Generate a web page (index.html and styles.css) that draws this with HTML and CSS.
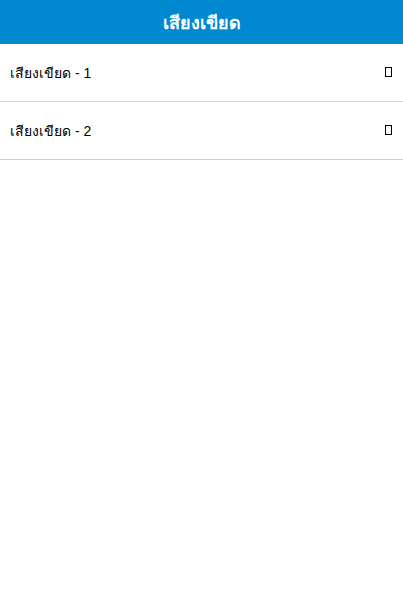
FILE: index.html
```html
<!DOCTYPE html>
<html>
    <head>
        <link rel="stylesheet" href="styles.css">
        <title>เสียงเขียด</title>
    </head>

    <body>
        <div class="app-header">เสียงเขียด</div>
        <ul class="sound-list">
            <li class="sound-item">
                <span class="sound-name">เสียงเขียด - 1</span>
                <span class="sound-icon"></span>
            </li>
            <li class="sound-item">
                <span class="sound-name">เสียงเขียด - 2</span>
                <span class="sound-icon"></span>
            </li>
        </ul>
    </body>
</html>
```

FILE: styles.css
```css
body {
    margin: 0;
    background-color: white;
    font-family: "Liberation Sans", Arial, sans-serif;
}

.app-header {
    height: 44px;
    background-color: #0088d1;
    color: white;
    font-size: 18px;
    font-weight: bold;
    display: flex;
    justify-content: center;
    align-items: center;
}

.sound-list {
    list-style: none;
    margin: 0;
    padding: 0;
}

.sound-item {
    height: 57px;
    border-bottom: 1px solid #d0d0d0;
    display: flex;
    align-items: center;
    justify-content: space-between;
    padding: 0 11px 0 10px;
    font-size: 14px;
    color: black;
}

.sound-icon {
    width: 5px;
    height: 8px;
    border: 1px solid black;
    margin-bottom: 2px;
}
```
